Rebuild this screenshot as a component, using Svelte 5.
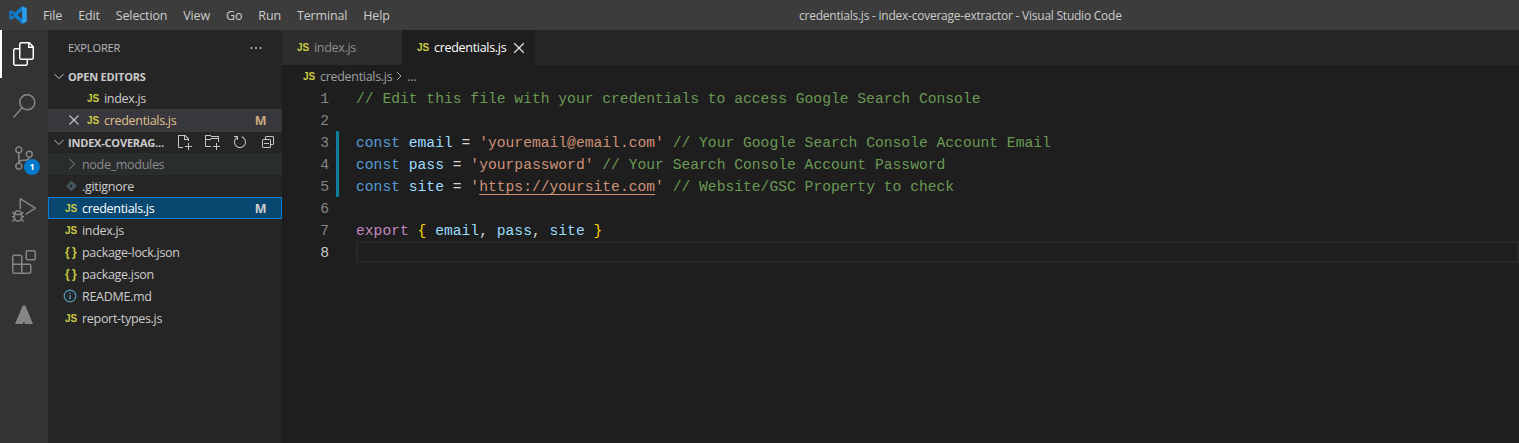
<script>
  const menus = ['File', 'Edit', 'Selection', 'View', 'Go', 'Run', 'Terminal', 'Help'];

  const activity = [
    { name: 'files', active: true, d: 'M17.5 0h-9L7 1.5V6H2.5L1 7.5v15.07L2.5 24h12.07L16 22.57V18h4.7l1.3-1.43V4.5L17.5 0zm0 2.12l2.38 2.38H17.5V2.12zm-3 20.38h-12v-15H7v9.07L8.5 18h6v4.5zm6-6h-12v-15H16V6h4.5v10.5z' },
    { name: 'search', d: 'M15.25 0a8.25 8.25 0 0 0-6.18 13.72L1 22.88l1.12 1 8.05-9.12A8.251 8.251 0 1 0 15.25.01V0zm0 15a6.75 6.75 0 1 1 0-13.5 6.75 6.75 0 0 1 0 13.5z' },
    { name: 'scm', badge: '1', d: 'M21.007 8.222A3.738 3.738 0 0 0 15.045 5.2a3.737 3.737 0 0 0 1.156 6.583 2.988 2.988 0 0 1-2.668 1.67h-2.99a4.456 4.456 0 0 0-2.989 1.165V7.4a3.737 3.737 0 1 0-1.494 0v9.117a3.776 3.776 0 1 0 1.816.099 2.99 2.99 0 0 1 2.668-1.667h2.99a4.484 4.484 0 0 0 4.223-3.039 3.736 3.736 0 0 0 3.25-3.687zM4.565 3.738a2.242 2.242 0 1 1 4.484 0 2.242 2.242 0 0 1-4.484 0zm4.484 16.441a2.242 2.242 0 1 1-4.484 0 2.242 2.242 0 0 1 4.484 0zm8.221-9.715a2.242 2.242 0 1 1 0-4.485 2.242 2.242 0 0 1 0 4.485z' },
    { name: 'debug', d: 'M10.94 13.5l-1.32 1.32a3.73 3.73 0 0 0-7.24 0L1.06 13.5 0 14.56l1.72 1.72-.22.22V18H0v1.5h1.5v.08c.077.489.214.966.41 1.42L0 22.94 1.06 24l1.65-1.65A4.308 4.308 0 0 0 6 24a4.31 4.31 0 0 0 3.29-1.65L10.94 24 12 22.94 10.09 21c.198-.464.336-.951.41-1.45v-.1H12V18h-1.5v-1.5l-.22-.22L12 14.56l-1.06-1.06zM6 13.5a2.25 2.25 0 0 1 2.25 2.25h-4.5A2.25 2.25 0 0 1 6 13.5zm3 6a3.33 3.33 0 0 1-3 3 3.33 3.33 0 0 1-3-3v-2.25h6v2.25zm14.76-9.9v1.26L13.5 17.37V15.6l8.5-5.37L9 2v9.46a5.07 5.07 0 0 0-1.5-.72V.63L8.64 0l15.12 9.6z' },
    { name: 'extensions', d: 'M13.5 1.5L15 0h7.5L24 1.5V9l-1.5 1.5H15L13.5 9V1.5zm1.5 0V9h7.5V1.5H15zM0 15V6l1.5-1.5H9L10.5 6v7.5H18l1.5 1.5v7.5L18 24H1.5L0 22.5V15zm9-1.5V6H1.5v7.5H9zM9 15H1.5v7.5H9V15zm1.5 7.5H18V15h-7.5v7.5z' },
    { name: 'azure', d: 'M10.8 3.5h2.6L21 22H12.8l-.6-2.6-1.7 2.6H3z' },
  ];

  const tree = [
    { name: 'node_modules', type: 'folder', cls: 'hover dim' },
    { name: '.gitignore', type: 'git' },
    { name: 'credentials.js', type: 'js', cls: 'selected', status: 'M' },
    { name: 'index.js', type: 'js' },
    { name: 'package-lock.json', type: 'json' },
    { name: 'package.json', type: 'json' },
    { name: 'README.md', type: 'info' },
    { name: 'report-types.js', type: 'js' },
  ];

  // each line of the file as [token class, text]
  const code = [
    [['cm', '// Edit this file with your credentials to access Google Search Console']],
    [],
    [['kw', 'const'], ['', ' '], ['id', 'email'], ['', ' = '], ['st', "'youremail@email.com'"], ['', ' '], ['cm', '// Your Google Search Console Account Email']],
    [['kw', 'const'], ['', ' '], ['id', 'pass'], ['', ' = '], ['st', "'yourpassword'"], ['', ' '], ['cm', '// Your Search Console Account Password']],
    [['kw', 'const'], ['', ' '], ['id', 'site'], ['', ' = '], ['st', "'"], ['st link', 'https://yoursite.com'], ['st', "'"], ['', ' '], ['cm', '// Website/GSC Property to check']],
    [],
    [['ex', 'export'], ['', ' '], ['br', '{'], ['', ' '], ['id', 'email'], ['', ', '], ['id', 'pass'], ['', ', '], ['id', 'site'], ['', ' '], ['br', '}']],
    [],
  ];
  const changed = [2, 3, 4];
  const current = 7;
</script>

{#snippet fileIcon(type)}
  {#if type === 'js'}
    <span class="ficon js">JS</span>
  {:else if type === 'json'}
    <span class="ficon json">{'{ }'}</span>
  {:else if type === 'info'}
    <span class="ficon">
      <svg class="info" width="14" height="14" viewBox="0 0 14 14"><circle cx="7" cy="7" r="5.8" fill="none" stroke="#519aba" stroke-width="1.2" /><rect x="6.3" y="6" width="1.4" height="4.4" fill="#519aba" /><rect x="6.3" y="3.6" width="1.4" height="1.4" fill="#519aba" /></svg>
    </span>
  {:else if type === 'git'}
    <span class="ficon">
      <svg width="14" height="14" viewBox="0 0 14 14"><path d="M6.5 1.5 12 7 6.5 12.5 1 7z" fill="#41535b" /><circle cx="6" cy="7" r="1.2" fill="#252526" /></svg>
    </span>
  {:else if type === 'folder'}
    <span class="ficon">
      <svg class="fold" width="10" height="12" viewBox="0 0 10 12"><path d="M2.5 1 7.5 6l-5 5" fill="none" stroke="currentColor" stroke-width="1" /></svg>
    </span>
  {/if}
{/snippet}

{#snippet sectionChevron()}
  <svg class="chev" width="16" height="16" viewBox="0 0 16 16"><path d="M3.5 6 8 10.5 12.5 6" fill="none" stroke="#c5c5c5" stroke-width="1" /></svg>
{/snippet}

<div class="window">
  <header class="titlebar">
    <div class="logo">
      <svg width="18" height="18" viewBox="0 0 100 100">
        <path d="M72 1 98 13V87L72 99 33 62 13 77 2 71V29L13 23 33 38Z M74 27 46 50 74 73Z M13 37V63L27 50Z" fill="#0e7fd0" fill-rule="evenodd" />
        <path d="M72 1 98 13V87L72 99 74 73V27Z" fill="#2a9fe8" />
      </svg>
    </div>
    <nav class="menu">
      {#each menus as m}
        <span class="menu-item">{m}</span>
      {/each}
    </nav>
    <div class="title">credentials.js - index-coverage-extractor - Visual Studio Code</div>
  </header>

  <div class="body">
    <aside class="activity">
      {#each activity as a}
        <div class="act" class:active={a.active}>
          <svg width="24" height="24" viewBox="0 0 24 24"><path d={a.d} fill="currentColor" fill-rule="evenodd" /></svg>
          {#if a.badge}
            <span class="badge">{a.badge}</span>
          {/if}
        </div>
      {/each}
    </aside>

    <aside class="sidebar">
      <div class="side-head">
        <span>EXPLORER</span>
        <svg width="16" height="16" viewBox="0 0 16 16" fill="#c5c5c5"><circle cx="3.5" cy="8" r="1" /><circle cx="8" cy="8" r="1" /><circle cx="12.5" cy="8" r="1" /></svg>
      </div>

      <div class="section">
        {@render sectionChevron()}
        <span class="section-title">OPEN EDITORS</span>
      </div>
      <div class="row open">
        <span class="slot"></span>
        {@render fileIcon('js')}
        <span class="name">index.js</span>
      </div>
      <div class="row open hl modified">
        <span class="slot">
          <svg width="16" height="16" viewBox="0 0 16 16"><path d="M3.5 3.5 12.5 12.5M12.5 3.5 3.5 12.5" stroke="#c5c5c5" stroke-width="1.1" /></svg>
        </span>
        {@render fileIcon('js')}
        <span class="name">credentials.js</span>
        <span class="status">M</span>
      </div>

      <div class="section workspace">
        {@render sectionChevron()}
        <span class="section-title">INDEX-COVERAG...</span>
        <div class="actions">
          <svg width="16" height="16" viewBox="0 0 16 16"><path fill-rule="evenodd" d="M9.5 1.1l3.4 3.5.1.4v2h-1V6H8V2H3v11h4v1H2.5l-.5-.5v-12l.5-.5h6.7l.3.1zM9 2v3h2.9L9 2zm4 14h-1v-3H9v-1h3V9h1v3h3v1h-3v3z" /></svg>
          <svg width="16" height="16" viewBox="0 0 16 16"><path fill-rule="evenodd" d="M14.5 2H7.71l-.85-.85L6.51 1h-5l-.5.5v11l.5.5H7v-1H1.99V6h4.49l.35-.15.86-.86H14v1.5l-.001 1.5h1.01V2.5L14.5 2zm-.51 2h-6.5l-.35.15-.86.86H2v-3h4.29l.85.85.36.15H14l-.01.99zM13 16h-1v-3H9v-1h3V9h1v3h3v1h-3v3z" /></svg>
          <svg width="16" height="16" viewBox="0 0 16 16"><path d="M5.56253 2.51577C3.46348 3.4501 2 5.55414 2 7.99999C2 11.3137 4.68629 14 8 14C11.3137 14 14 11.3137 14 7.99999C14 5.32519 12.2497 3.05919 9.83199 2.28482L9.52968 3.23832C11.5429 3.88454 13 5.7721 13 7.99999C13 10.7614 10.7614 13 8 13C5.23858 13 3 10.7614 3 7.99999C3 6.31104 3.83742 4.81767 5.11969 3.91245L5.56253 2.51577Z" /><path d="M5 3H2V2H5.5L6 2.5V6H5V3Z" /></svg>
          <svg width="16" height="16" viewBox="0 0 16 16"><path d="M9 9H4v1h5V9z" /><path fill-rule="evenodd" d="M5 3l1-1h7l1 1v7l-1 1h-2v2l-1 1H3l-1-1V6l1-1h2V3zm1 2h4l1 1v4h2V3H6v2zm4 1H3v7h7V6z" /></svg>
        </div>
      </div>
      {#each tree as f}
        <div class="row tree {f.cls ?? ''}">
          {@render fileIcon(f.type)}
          <span class="name">{f.name}</span>
          {#if f.status}
            <span class="status">{f.status}</span>
          {/if}
        </div>
      {/each}
    </aside>

    <main class="editor">
      <div class="tabs">
        <div class="tab">
          {@render fileIcon('js')}
          <span>index.js</span>
        </div>
        <div class="tab on">
          {@render fileIcon('js')}
          <span>credentials.js</span>
          <svg class="tab-x" width="16" height="16" viewBox="0 0 16 16"><path d="M3.2 3.2 12.8 12.8M12.8 3.2 3.2 12.8" stroke="#e0e0e0" stroke-width="1.3" /></svg>
        </div>
      </div>
      <div class="crumbs">
        {@render fileIcon('js')}
        <span>credentials.js</span>
        <svg width="12" height="12" viewBox="0 0 12 12"><path d="M4 2 8 6 4 10" fill="none" stroke="#a0a0a0" stroke-width="1" /></svg>
        <span>...</span>
      </div>
      <div class="code">
        {#each code as line, i}
          <div class="line">
            <span class="num" class:cur={i === current}>{i + 1}</span>
            <span class="deco" class:changed={changed.includes(i)}></span>
            <div class="text" class:cur-line={i === current}>{#each line as [cls, t]}<span class={cls}>{t}</span>{/each}</div>
          </div>
        {/each}
      </div>
    </main>
  </div>
</div>

<style>
  :global(body) {
    margin: 0;
    background: #1e1e1e;
  }
  .window {
    height: 443px;
    overflow: hidden;
    display: flex;
    flex-direction: column;
    font-family: "Open Sans", "Noto Sans", sans-serif;
    font-size: 12.5px;
    letter-spacing: -0.3px;
    color: #ccc;
  }
  .titlebar {
    height: 30px;
    flex: none;
    display: flex;
    align-items: center;
    background: #3c3c3c;
  }
  .logo {
    width: 35px;
    padding-left: 9px;
    box-sizing: border-box;
    display: flex;
  }
  .menu {
    display: flex;
    letter-spacing: -0.15px;
  }
  .menu-item {
    padding: 0 8px;
    color: #cccccc;
  }
  .title {
    flex: 1;
    padding-left: 4px;
    text-align: center;
    font-size: 12px;
    letter-spacing: -0.24px;
    color: #cccccc;
  }
  .body {
    flex: 1;
    display: flex;
    min-height: 0;
  }
  .activity {
    width: 48px;
    flex: none;
    background: #333333;
    display: flex;
    flex-direction: column;
    gap: 4px;
  }
  .act {
    position: relative;
    height: 48px;
    display: flex;
    align-items: center;
    justify-content: center;
    color: #858585;
    box-sizing: border-box;
  }
  .act.active {
    color: #fff;
    border-left: 2px solid #fff;
    padding-right: 2px;
  }
  .badge {
    position: absolute;
    left: 24px;
    top: 25px;
    width: 16px;
    height: 16px;
    border-radius: 50%;
    background: #007acc;
    color: #fff;
    font-size: 9px;
    font-weight: 700;
    line-height: 16px;
    text-align: center;
  }
  .sidebar {
    width: 234px;
    flex: none;
    background: #252526;
  }
  .side-head {
    height: 35px;
    display: flex;
    align-items: center;
    justify-content: space-between;
    padding: 0 18px 0 20px;
    font-size: 11px;
    letter-spacing: -0.1px;
    color: #bbbbbb;
  }
  .section {
    height: 22px;
    display: flex;
    align-items: center;
    padding-left: 3px;
    font-size: 11px;
    font-weight: 700;
    letter-spacing: -0.2px;
    color: #cccccc;
  }
  .workspace {
    box-shadow: inset 0 1px 0 rgba(204, 204, 204, 0.12);
  }
  .chev {
    flex: none;
    margin-right: 1px;
  }
  .section-title {
    flex: 1;
    min-width: 0;
    white-space: nowrap;
  }
  .actions {
    display: flex;
    flex: none;
  }
  .actions svg {
    fill: #c5c5c5;
    padding: 0 6px;
  }
  .row {
    height: 22px;
    display: flex;
    align-items: center;
    box-sizing: border-box;
  }
  .row.open {
    padding-left: 18px;
  }
  .row.tree {
    padding-left: 17px;
  }
  .slot {
    width: 21px;
    display: flex;
  }
  .ficon {
    width: 17px;
    flex: none;
    display: inline-flex;
    align-items: center;
    justify-content: flex-start;
  }
  .info {
    margin-left: -2px;
  }
  .fold {
    margin-left: 2px;
  }
  .js,
  .json {
    font-family: "Liberation Sans", sans-serif;
    font-size: 10px;
    font-weight: 700;
    letter-spacing: 0;
    color: #cbcb41;
  }
  .json {
    font-size: 12px;
    white-space: pre;
    letter-spacing: -0.5px;
  }
  .name {
    flex: 1;
  }
  .status {
    width: 21px;
    margin-right: 11px;
    font-weight: 700;
    font-size: 12.5px;
    text-align: center;
    color: #c8ab7e;
  }
  .row.hl {
    background: #37373d;
  }
  .modified .name {
    color: #e2c08d;
  }
  .row.hover {
    background: #2a2d2e;
  }
  .dim {
    color: #8c8c8c;
  }
  .row.selected {
    background: #094771;
    outline: 1px solid #007fd4;
    outline-offset: -1px;
    color: #fff;
  }
  .row.selected .status {
    color: #cccccc;
  }
  .editor {
    flex: 1;
    min-width: 0;
    background: #1e1e1e;
    display: flex;
    flex-direction: column;
  }
  .tabs {
    height: 35px;
    flex: none;
    display: flex;
    background: #252526;
  }
  .tab {
    width: 120px;
    box-sizing: border-box;
    padding-left: 15px;
    display: flex;
    align-items: center;
    background: #2d2d2d;
    color: #8f8f8f;
  }
  .tab.on {
    width: 133px;
    background: #1e1e1e;
    color: #fff;
  }
  .tab-x {
    margin-left: 5px;
  }
  .crumbs {
    height: 22px;
    flex: none;
    display: flex;
    align-items: center;
    padding-left: 21px;
    color: #a0a0a0;
  }
  .crumbs svg {
    margin: 0 2px 0 1px;
  }
  .code {
    font-family: "Liberation Mono", monospace;
    font-size: 14.67px;
    letter-spacing: 0;
    white-space: pre;
  }
  .line {
    height: 22px;
    line-height: 24px;
    display: flex;
  }
  .num {
    width: 47px;
    text-align: right;
    color: #858585;
    flex: none;
  }
  .num.cur {
    color: #c6c6c6;
  }
  .deco {
    width: 3px;
    margin-left: 7px;
    margin-right: 9px;
    flex: none;
  }
  .deco.changed {
    background: #0c7d9d;
  }
  .text {
    flex: 1;
    margin-left: 8px;
    color: #d4d4d4;
  }
  .cur-line {
    box-shadow: inset 0 0 0 2px #282828;
  }
  .cm { color: #6a9955; }
  .kw { color: #569cd6; }
  .id { color: #9cdcfe; }
  .st { color: #ce9178; }
  .ex { color: #c586c0; }
  .br { color: #ffd700; }
  .link { text-decoration: underline; text-underline-offset: 3px; }
</style>
